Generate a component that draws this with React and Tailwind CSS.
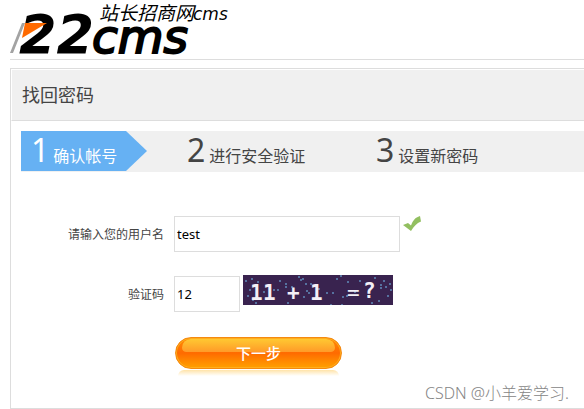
import { useState } from "react";

const STEPS = [
  { no: 1, label: "确认帐号" },
  { no: 2, label: "进行安全验证" },
  { no: 3, label: "设置新密码" },
];

const NOISE = [
  [2, 5], [8, 3], [14, 6], [6, 14], [9, 24], [12, 27], [4, 20], [20, 16], [26, 20],
  [30, 14], [34, 14], [36, 5], [42, 8], [42, 11], [48, 11], [44, 27], [55, 1], [57, 4],
  [59, 3], [62, 8], [67, 8], [63, 15], [60, 21], [65, 17], [71, 23], [75, 13], [83, 17],
  [89, 17], [87, 29], [93, 3], [97, 0], [104, 6], [99, 21], [103, 20], [98, 29], [111, 16],
  [116, 5], [124, 20], [131, 2], [137, 9], [137, 12], [140, 5], [142, 11], [146, 8],
  [147, 14], [144, 20], [135, 25], [128, 27],
];

export default function App() {
  const [username, setUsername] = useState("test");
  const [code, setCode] = useState("12");

  return (
    <div className="relative overflow-hidden bg-white pl-[10px] font-['Noto_Sans','Noto_Sans_CJK_SC',sans-serif] text-[#444]">
      <header className="h-[60px] border-b border-[#ddd]">
        <a href="#" aria-label="ZZCMS" className="block w-[220px]">
          <Logo />
        </a>
      </header>

      <main className="mt-2 border border-r-0 border-[#ddd]">
        <h1 className="flex h-[52px] items-center border-t border-b border-l border-t-white border-b-[#ddd] border-l-white bg-[#f0f0f0] pl-[10px] text-lg">
          找回密码
        </h1>

        <ol className="mt-[10px] ml-[10px] flex h-[41px] bg-[#f0f0f0]">
          {STEPS.map((step) => (
            <Step key={step.no} {...step} active={step.no === 1} />
          ))}
        </ol>

        <form className="pt-11 pb-8 pl-[10px]" onSubmit={(e) => e.preventDefault()}>
          <div className="flex h-[60px] items-start">
            <label htmlFor="username" className="w-[143px] text-right text-xs leading-[38px]">
              请输入您的用户名
            </label>
            <input
              id="username"
              value={username}
              onChange={(e) => setUsername(e.target.value)}
              className="ml-[10px] h-9 w-[226px] border border-[#ddd] px-[2px] text-[13px] text-black outline-none"
            />
            <Tick />
          </div>

          <div className="flex h-[60px] items-start">
            <label htmlFor="code" className="w-[143px] text-right text-xs leading-[38px]">
              验证码
            </label>
            <input
              id="code"
              value={code}
              onChange={(e) => setCode(e.target.value)}
              className="ml-[10px] h-9 w-[66px] border border-[#ddd] px-[2px] text-[13px] text-black outline-none"
            />
            <Captcha />
          </div>

          <div className="ml-[154px] w-[167px] pt-px">
            <button
              type="submit"
              className="relative block h-8 w-full rounded-full border border-[#f48a10] bg-linear-to-b from-[#ff8c08] via-[#ff6a00] to-[#ffa000] text-[15px] font-medium text-white shadow-[inset_0_0_0_1px_#ffae1c]"
            >
              <span className="absolute inset-x-[6px] top-[1px] h-[13px] rounded-t-xl rounded-b-md bg-linear-to-b from-[#ffc832] to-[#ff9a28]" />
              <span className="relative">下一步</span>
            </button>
            <div className="mx-[3px] mt-[1px] h-[6px] rounded-t-full bg-linear-to-b from-[#ffe3a8] to-white" />
          </div>
        </form>
      </main>

      <p className="absolute right-[15px] bottom-1 text-base leading-6 font-light text-[#858585]">
        CSDN @小羊爱学习.
      </p>
    </div>
  );
}

function Step({ no, label, active }) {
  if (active) {
    return (
      <li className="flex w-[147px] text-white" aria-current="step">
        <div className="flex h-10 w-[105px] items-baseline gap-1 bg-[#66b1f3] pl-[10px] whitespace-nowrap">
          <span className="text-[32px] leading-[38px]">{no}</span>
          <span className="text-base">{label}</span>
        </div>
        <svg width="21" height="40" viewBox="0 0 21 40" aria-hidden="true">
          <path d="M0 0L21 20L0 40Z" fill="#66b1f3" />
        </svg>
      </li>
    );
  }
  return (
    <li className="flex h-10 w-[189px] items-baseline gap-1 pl-[19px] whitespace-nowrap">
      <span className="text-[32px] leading-[38px]">{no}</span>
      <span className="text-base">{label}</span>
    </li>
  );
}

function Logo() {
  return (
    <svg width="220" height="59" viewBox="10 0 220 59" className="block overflow-visible" aria-hidden="true">
      <path d="M22 23H25L13 53H10Z" fill="#a3a3a3" />
      <g fill="#000" fontStyle="italic" fontFamily="DejaVu Sans, sans-serif">
        <text x="19" y="53" fontSize="54" fontWeight="700">22</text>
        <text x="92" y="53" fontSize="47" stroke="#000" strokeWidth="2">cms</text>
        <text x="99" y="20" fontSize="19" fontWeight="400" fontFamily="Noto Sans CJK SC, sans-serif">
          站长招商网
        </text>
        <text x="193" y="20" fontSize="17">cms</text>
      </g>
      <path d="M25 23H47L22 38Z" fill="#ff6a00" />
    </svg>
  );
}

function Tick() {
  return (
    <svg width="18" height="16" viewBox="0 0 18 16" className="ml-[3px]" role="img" aria-label="可用">
      <path d="M0 9L5 7L8 9.500C10 4.500 12 1.500 17 0L18 5.500C13.500 7 11 10.500 8 15Z" fill="#92bf60" />
    </svg>
  );
}

function Captcha() {
  return (
    <svg
      width="150"
      height="30"
      viewBox="0 0 150 30"
      className="-mt-px ml-[3px] bg-[#39234f]"
      role="img"
      aria-label="11 + 1 = ?"
    >
      {NOISE.map(([x, y]) => (
        <rect key={`${x}-${y}`} x={x} y={y} width="2" height="2" fill="#56719f" />
      ))}
      <g fill="#f3eff6" fontFamily="DejaVu Sans Mono, monospace" fontWeight="700" fontSize="21">
        <text x="7" y="25">1</text>
        <text x="20" y="25">1</text>
        <text x="44" y="25">+</text>
        <text x="67" y="25">1</text>
        <text x="104" y="25" fontWeight="400">=</text>
        <text x="120" y="23">?</text>
      </g>
    </svg>
  );
}
